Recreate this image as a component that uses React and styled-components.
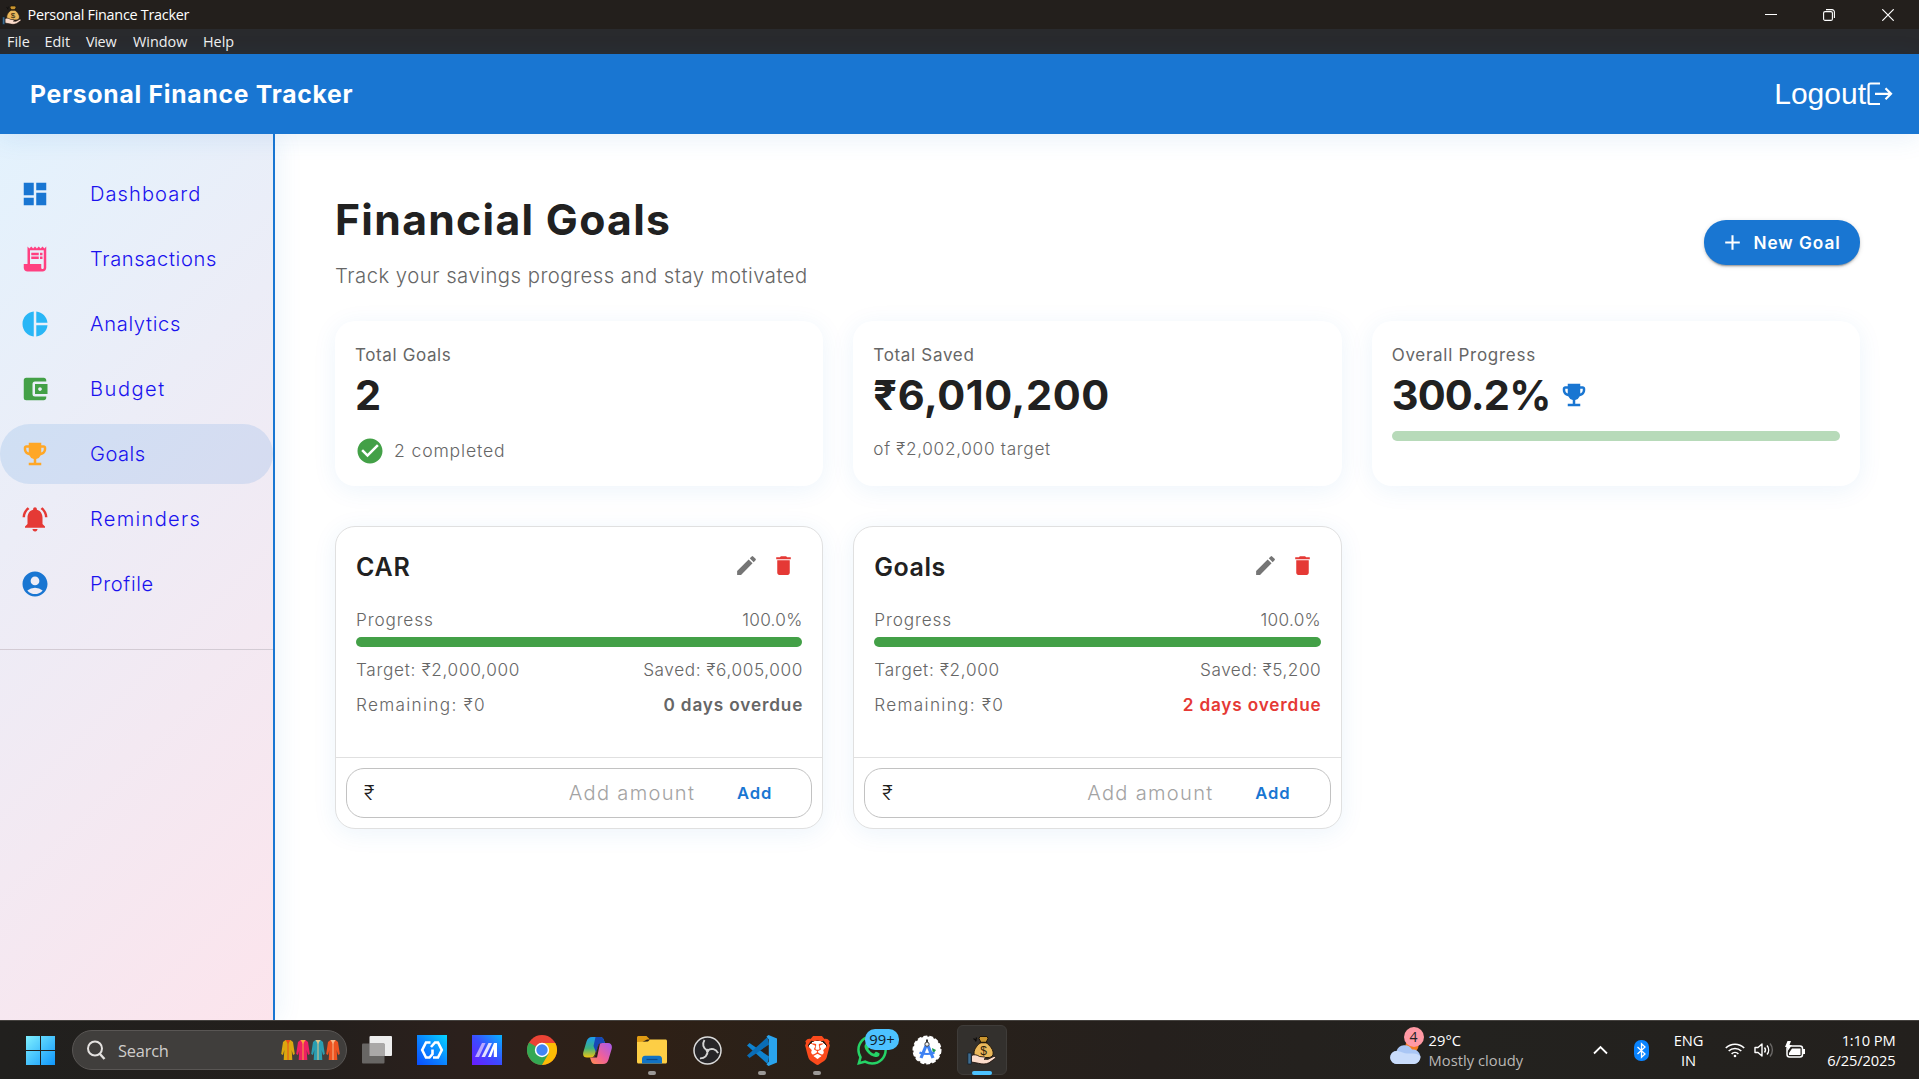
import React from "react";
import styled, { createGlobalStyle } from "styled-components";
import {
  MdDashboard,
  MdReceiptLong,
  MdPieChart,
  MdAccountBalanceWallet,
  MdEmojiEvents,
  MdNotificationsActive,
  MdAccountCircle,
  MdCheckCircle,
  MdEdit,
  MdDelete,
  MdAdd,
} from "react-icons/md";
import { SiWhatsapp, SiBrave } from "react-icons/si";

const c = {
  blue: "#1976d2",
  green: "#43a047",
  red: "#e53935",
  ink: "#212121",
  soft: "#666666",
  link: "#1a12ee",
  line: "#e0e0e0",
};

const GlobalStyle = createGlobalStyle`
  * { box-sizing: border-box; }
  body { margin: 0; background: #fff; overflow: hidden; }
`;

const Screen = styled.div`
  display: flex;
  flex-direction: column;
  width: 1919px;
  height: 1079px;
  overflow: hidden;
  font-family: Inter, "Noto Sans", sans-serif;
  color: ${c.ink};
`;

const Text = styled.span`
  font-size: ${(p) => p.$size}px;
  font-weight: ${(p) => p.$weight || 300};
  color: ${(p) => p.$color || "inherit"};
  letter-spacing: ${(p) => p.$track || 0}px;
  margin-right: ${(p) => -(p.$track || 0)}px;
  line-height: ${(p) => (p.$line ? `${p.$line}px` : "inherit")};
  white-space: nowrap;
`;

/* Window chrome */

const TitleBar = styled.header`
  display: flex;
  align-items: center;
  height: 29px;
  flex: none;
  padding: 0 0 0 2px;
  background: #231f1c;
  color: #fff;
  font-family: "Open Sans", sans-serif;
`;

const TitleText = styled.span`
  flex: 1;
  padding-left: 5.5px;
  font-size: 14.4px;
  letter-spacing: -0.26px;
`;

const WindowButtons = styled.div`
  display: flex;
  align-items: center;
`;

const WindowButton = styled.span`
  display: flex;
  justify-content: center;
  width: 58.5px;
  &:last-child { margin-right: 2px; }
`;

const MenuBar = styled.nav`
  display: flex;
  align-items: center;
  height: 25px;
  flex: none;
  padding-left: 7px;
  background: #292a2d;
  color: #f1f1f1;
  font-family: "Open Sans", sans-serif;
  font-size: 14.4px;
  line-height: 24px;
`;

const MenuItem = styled.span`
  width: ${(p) => p.$w}px;
  letter-spacing: ${(p) => p.$track}px;
`;

/* Application */

const AppBar = styled.header`
  display: flex;
  align-items: center;
  justify-content: space-between;
  height: 80px;
  flex: none;
  padding: 0 26px 0 30px;
  background: ${c.blue};
  color: #fff;
  box-shadow: 0 4px 24px rgba(25, 118, 210, 0.1);
  position: relative;
  z-index: 2;
`;

const Logout = styled.button`
  display: flex;
  align-items: center;
  border: 0;
  padding: 0;
  background: none;
  color: #fff;
  font: 30px/40px "Liberation Sans", sans-serif;
`;

const Body = styled.div`
  display: flex;
  height: 886px;
  flex: none;
`;

const Sidebar = styled.aside`
  width: 275px;
  flex: none;
  padding-top: 30px;
  border-right: 2px solid ${c.blue};
  background: linear-gradient(135deg, #e3f2fd 0%, #fce4ec 100%);
  background-origin: border-box;
  box-shadow: 4px 0 24px rgba(25, 118, 210, 0.08);
`;

const NavList = styled.nav`
  display: flex;
  flex-direction: column;
  gap: 5px;
  padding-bottom: 35px;
  border-bottom: 1px solid #d3cbd4;
`;

const NavItem = styled.a`
  display: flex;
  align-items: center;
  gap: 40px;
  height: 60px;
  padding-left: 20px;
  border-radius: 30px;
  background: ${(p) => (p.$active ? "rgba(25, 118, 210, 0.12)" : "transparent")};
  svg { width: 30px; height: 30px; color: ${(p) => p.$tint}; }
`;

const Main = styled.main`
  flex: 1;
  padding: 60px 59px 0 60px;
`;

const PageHeader = styled.div`
  display: flex;
  align-items: center;
  justify-content: space-between;
  height: 97px;
`;

const Heading = styled.div`
  display: flex;
  flex-direction: column;
  gap: 15px;
`;

const NewGoal = styled.button`
  display: flex;
  align-items: center;
  gap: 9px;
  width: 156px;
  height: 45px;
  padding: 0 0 1px 15.5px;
  border: 0;
  border-radius: 22px;
  background: ${c.blue};
  color: #fff;
  font-family: inherit;
  box-shadow: 0 3px 1px -2px rgba(0, 0, 0, 0.2), 0 2px 2px rgba(0, 0, 0, 0.14),
    0 1px 5px rgba(0, 0, 0, 0.12);
  svg { width: 25px; height: 25px; }
`;

const CardGrid = styled.section`
  display: grid;
  grid-template-columns: repeat(3, 1fr);
  gap: 30px;
  margin-top: ${(p) => p.$top}px;
`;

const Card = styled.article`
  border-radius: 20px;
  background: #fff;
  box-shadow: 0 4px 24px rgba(25, 118, 210, 0.08);
`;

const StatCard = styled(Card)`
  display: flex;
  flex-direction: column;
  height: 165px;
  padding: 20px;
`;

const StatValue = styled.div`
  display: flex;
  align-items: center;
  gap: 8px;
  height: 52px;
  line-height: 52px;
  svg { width: 30px; height: 30px; color: ${c.blue}; }
`;

const Completed = styled.div`
  display: flex;
  align-items: center;
  gap: 9px;
  height: 30px;
  margin-top: 15px;
  line-height: 32px;
  svg { width: 30px; height: 30px; color: ${c.green}; }
`;

const TargetNote = styled.div`
  margin-top: 15px;
  line-height: 26px;
`;

const Bar = styled.div`
  height: 10px;
  margin-top: ${(p) => p.$top}px;
  border-radius: 5px;
  background: ${(p) => p.$color};
`;

const GoalCard = styled(Card)`
  height: 303px;
  border: 1px solid ${c.line};
`;

const GoalBody = styled.div`
  display: flex;
  flex-direction: column;
  height: 230px;
  padding: 20px 20px 0;
`;

const GoalTitle = styled.div`
  display: flex;
  align-items: center;
  justify-content: space-between;
  height: 40px;
  margin-bottom: 20px;
`;

const GoalActions = styled.div`
  display: flex;
  gap: 12px;
  padding: 0 6px 3px 0;
  svg { width: 25px; height: 25px; }
`;

const EditIcon = styled(MdEdit)`
  color: #757575;
`;

const DeleteIcon = styled(MdDelete)`
  color: ${c.red};
`;

const Row = styled.div`
  display: flex;
  justify-content: space-between;
  line-height: 26px;
  margin-top: ${(p) => p.$top || 0}px;
`;

const GoalFooter = styled.footer`
  padding: 10px;
  border-top: 1px solid ${c.line};
`;

const AmountField = styled.div`
  display: flex;
  align-items: center;
  height: 50px;
  padding: 0 40px 0 17px;
  border: 1px solid #c2c2c2;
  border-radius: 18px;
  line-height: 48px;
`;

const Placeholder = styled.span`
  flex: 1;
  margin-right: 43px;
  text-align: right;
`;

/* Taskbar */

const Taskbar = styled.footer`
  display: flex;
  align-items: center;
  height: 59px;
  flex: none;
  position: relative;
  z-index: 3;
  padding-left: 26px;
  border-top: 1px solid #45423f;
  background: linear-gradient(90deg, #21201e 0%, #231f1c 16%, #2b201c 24%, #2e2016 34%, #2a2119 43%, #25201d 60%, #23221f 76%, #23201d 100%);
  color: #fff;
  font-family: "Open Sans", sans-serif;
`;

const SearchBox = styled.div`
  display: flex;
  align-items: center;
  width: 275px;
  height: 40px;
  margin: 0 2.5px 0 17px;
  padding: 0 6px 0 13px;
  border: 1px solid #595654;
  border-radius: 20px;
  background: #403e3c;
`;

const SearchLabel = styled.span`
  flex: 1;
  padding-left: 12px;
  color: #cfcdcb;
  font-size: 16.4px;
  letter-spacing: -0.2px;
`;

const Apps = styled.div`
  display: flex;
`;

const AppSlot = styled.div`
  display: flex;
  align-items: center;
  justify-content: center;
  position: relative;
  width: 55px;
  height: 58px;
  svg { display: block; }
`;

const Running = styled.i`
  position: absolute;
  bottom: 4px;
  left: 50%;
  width: ${(p) => p.$w}px;
  height: 4px;
  margin-left: ${(p) => -p.$w / 2}px;
  border-radius: 2px;
  background: ${(p) => p.$color};
`;

const Badge = styled.b`
  position: absolute;
  top: 8px;
  left: 20.5px;
  width: 34px;
  height: 21px;
  border-radius: 10px;
  background: #4cc2ff;
  color: #10202b;
  font: 400 14.8px/20px "Open Sans", sans-serif;
  text-align: center;
`;

const ActiveTile = styled.div`
  display: flex;
  align-items: center;
  justify-content: center;
  width: 50px;
  height: 50px;
  border: 1px solid #3f3c39;
  border-radius: 6px;
  background: #33302d;
`;

const Weather = styled.div`
  display: flex;
  align-items: center;
  gap: 8px;
  margin-left: 380px;
  width: 203px;
`;

const WeatherIcon = styled.div`
  position: relative;
  width: 31px;
  height: 40px;
`;

const AlertBadge = styled.b`
  position: absolute;
  top: -3px;
  left: 14px;
  width: 20px;
  height: 20px;
  border-radius: 50%;
  background: #ff99a4;
  color: #222;
  font: 400 14px/20px "Open Sans", sans-serif;
  text-align: center;
`;

const Stack = styled.div`
  display: flex;
  flex-direction: column;
  align-items: ${(p) => p.$align};
  width: ${(p) => (p.$w ? `${p.$w}px` : "auto")};
  font-size: 14.7px;
  line-height: 20px;
  letter-spacing: ${(p) => p.$track || 0}px;
  white-space: nowrap;
`;

const Dim = styled.span`
  color: #bab7b5;
`;

const Tray = styled.div`
  display: flex;
  align-items: center;
`;

const TrayIcon = styled.span`
  display: flex;
  align-items: center;
  width: ${(p) => p.$w}px;
`;

const Language = styled.div`
  width: 55px;
`;

function MoneyBag({ size }) {
  return (
    <svg width={size} height={size} viewBox="0 0 30 30">
      <path d="M13 1.500h7l1 2-2 4h-5l-2-4z" fill="#c9952f" stroke="#201508" strokeWidth="1" />
      <path d="M14 7.500h5c4 3 8 7.500 7 12-.6 2.500-3 3-5 3h-9c-3 0-5-1-5-4.500 0-4.500 4-8.500 7-10.500z" fill="#ebb85b" stroke="#251a0c" strokeWidth="1" />
      <path d="M12.500 7.500h8" stroke="#251a0c" strokeWidth="1.500" />
      <path d="M6.500 3.500l3 2.500M9.500 2.500l-1 4" stroke="#0e0c0b" strokeWidth="1.200" />
      <text x="16.500" y="19.500" fontFamily="Liberation Sans" fontSize="12" textAnchor="middle" fill="#2b1d0c">$</text>
      <path d="M4.500 20.500c3-1.500 6-.5 8 1l5 .5c1.500.5 1 2-.5 2.200l4 .1 5-2.500c2-1 3.500.5 2 1.800l-6 4.200c-3 1.500-7 1.500-10.500.5l-7-1.300z" fill="#fcdccb" stroke="#22150f" strokeWidth=".9" />
      <path d="M.8 18h3.400v11H.8z" fill="#3f6f94" stroke="#14202b" strokeWidth=".8" />
    </svg>
  );
}

const Kurta = styled.svg`
  margin-left: 1px;
`;

function Kurtas() {
  const pairs = [
    ["#dba70f", "#e9501c"],
    ["#ee1f63", "#f8a63c"],
    ["#2a9db0", "#e3c489"],
    ["#ee5320", "#f6b98a"],
  ];
  return pairs.map(([body, trim]) => (
    <Kurta key={body} width="14" height="22" viewBox="0 0 14 22">
      <path d="M4.500 1h5l2.500 2 1.800 12-1.800 1-1.300-5 .6 10H2.700l.6-10L2 16l-1.800-1L2 3z" fill={body} />
      <path d="M4.500 1h5L7 5z" fill={trim} />
      <path d="M7 4v17" stroke={trim} strokeWidth="1" />
    </Kurta>
  ));
}

function WindowsLogo() {
  return (
    <svg width="29" height="29" viewBox="0 0 29 29">
      <defs>
        <linearGradient id="win" x1="0" y1="0" x2="1" y2="1">
          <stop offset="0" stopColor="#7ff0ff" />
          <stop offset="1" stopColor="#0f96fb" />
        </linearGradient>
      </defs>
      <path d="M0 0h14v14H0zM15 0h14v14H15zM0 15h14v14H0zM15 15h14v14H15z" fill="url(#win)" />
    </svg>
  );
}

function TaskView() {
  return (
    <svg width="30" height="28" viewBox="0 0 30 28">
      <rect x="7.500" width="22.500" height="20" rx="1" fill="#ededed" />
      <rect y="7.500" width="22.500" height="20" rx="1" fill="#686664" />
      <rect x="7.500" y="7.500" width="15" height="12.500" fill="#aaa8a7" />
    </svg>
  );
}

function HexApp() {
  return (
    <svg width="30" height="30" viewBox="0 0 30 30">
      <defs>
        <linearGradient id="hex" x1="0" y1="1" x2="1" y2="0">
          <stop offset="0" stopColor="#0a4dff" />
          <stop offset=".5" stopColor="#0a86ff" />
          <stop offset="1" stopColor="#05d5ff" />
        </linearGradient>
      </defs>
      <path d="M0 0h30v30H0z" fill="url(#hex)" />
      <g fill="none" stroke="#fff" strokeWidth="2.600">
        <path d="M13.500 7.500H9L5.200 15 9 22.500h3.500l3-3.500v-4.500" />
        <path d="M16 22.500h5l3.800-7.500L21 7.500h-3l-4 4.500" />
      </g>
    </svg>
  );
}

function SlashApp() {
  return (
    <svg width="30" height="30" viewBox="0 0 30 30">
      <defs>
        <linearGradient id="slash" x1="0" y1="1" x2="1" y2="0">
          <stop offset="0" stopColor="#6a1bff" />
          <stop offset=".5" stopColor="#3b4cff" />
          <stop offset="1" stopColor="#05b4ff" />
        </linearGradient>
      </defs>
      <path d="M0 0h30v30H0z" fill="url(#slash)" />
      <path d="M3 22L10 8h3.500L7 22z" fill="#b9a8ff" />
      <path d="M9.500 22l7-14H20l-7 14z" fill="#e3e0ff" />
      <path d="M16 22l6-14h3v14h-3.200v-8L19 22z" fill="#fff" />
    </svg>
  );
}

function Chrome() {
  return (
    <svg width="30" height="30" viewBox="0 0 30 30">
      <circle cx="15" cy="15" r="15" fill="#ea4335" />
      <path d="M15 15L2 7.500A15 15 0 0 0 15 30l7-11z" fill="#34a853" />
      <path d="M15 8h13.300A15 15 0 0 1 15 30l6.500-11.200z" fill="#fbbc05" />
      <circle cx="15" cy="15" r="7.200" fill="#fff" />
      <circle cx="15" cy="15" r="5.700" fill="#4285f4" />
    </svg>
  );
}

function Copilot() {
  return (
    <svg width="29" height="27" viewBox="0 0 29 27">
      <defs>
        <linearGradient id="cpA" x1="0" y1="0" x2="0" y2="1">
          <stop offset="0" stopColor="#1c9bf0" />
          <stop offset=".55" stopColor="#3fb37f" />
          <stop offset="1" stopColor="#f2c40f" />
        </linearGradient>
        <linearGradient id="cpB" x1="1" y1="0" x2="0" y2="1">
          <stop offset="0" stopColor="#a45bf0" />
          <stop offset=".55" stopColor="#f0609a" />
          <stop offset="1" stopColor="#ff8e4c" />
        </linearGradient>
      </defs>
      <path d="M9 0h8c2.500 0 3.500 1.500 4.200 4L22 6h-4c-2 0-3 1-3.700 3.500L12 17c-.8 2.400-2 3.500-4.500 3.500H4C.5 20.500-.6 18 .5 14.500l3-10C4.500 1.500 6 0 9 0z" fill="url(#cpA)" />
      <path d="M20 27h-8c-2.500 0-3.500-1.500-4.200-4L7 20.500h2c2 0 3-1 3.700-3.500L15 9.500C15.800 7 17 6 19.500 6H25c3.500 0 4.600 3 3.500 6.500l-3 10C24.500 25.500 23 27 20 27z" fill="url(#cpB)" />
      <path d="M12.500 0H17c2.500 0 3.500 1.500 4.200 4L22 6h-3c-2.500 0-3.300.8-4.200 3.300L13 15.500 10.500 9z" fill="#1747b8" />
      <path d="M12.700 17L15 9.500c.5-1.500 1-2.300 2-2.900L14 20.500H9c2 0 3-1 3.700-3.500z" fill="#2a211a" />
    </svg>
  );
}

function Folder() {
  return (
    <svg width="30" height="28" viewBox="0 0 30 28">
      <path d="M0 1.500C0 .6.600 0 1.500 0h8l3.500 3.500h-3L0 9z" fill="#e09b13" />
      <path d="M0 6l11-.5 2-2h15.500c.9 0 1.500.6 1.500 1.500V26c0 .9-.6 1.500-1.500 1.500h-27C.6 27.500 0 26.900 0 26z" fill="#fdce45" />
      <path d="M5 27.500V23c0-2 1-3.300 3-3.300h14c2 0 3 1.300 3 3.300v4.500z" fill="#1273c4" />
      <path d="M9.500 23.500h11" stroke="#0a4a8b" strokeWidth="1.200" />
    </svg>
  );
}

function Obs() {
  return (
    <svg width="29" height="29" viewBox="0 0 29 29">
      <circle cx="14.500" cy="14.500" r="13.500" fill="#262528" stroke="#dcdcdc" strokeWidth="1.500" />
      <g fill="none" stroke="#d4d4d4" strokeWidth="1.900">
        <path d="M14.500 14.500C10 12.500 9 8 11.500 4" />
        <path d="M14.500 14.500C10 12.500 9 8 11.500 4" transform="rotate(120 14.500 14.500)" />
        <path d="M14.500 14.500C10 12.500 9 8 11.500 4" transform="rotate(240 14.500 14.500)" />
      </g>
      <circle cx="14.500" cy="14.500" r="1.800" fill="#d4d4d4" />
    </svg>
  );
}

function VsCode() {
  return (
    <svg width="30" height="31" viewBox="0 0 30 31">
      <path d="M2.500 8L0 10.500 20.500 29l1.500-7.500z" fill="#0f83cf" />
      <path d="M2.500 23L0 20.500 20.500 2l1.500 7.500z" fill="#0a6db6" />
      <path d="M21.500 0L30 3.500v24L21.500 31l-2-1.500 2.300-3V4.500l-2.300-3z" fill="#2aa4ee" />
    </svg>
  );
}

const BraveMark = styled.div`
  display: flex;
  padding: 1px;
  background: radial-gradient(closest-side, #fff 62%, transparent 64%);
  color: #fb4a1c;
`;

function AndroidStudio() {
  return (
    <svg width="30" height="30" viewBox="0 0 30 30">
      <circle cx="15" cy="15" r="13.600" fill="#fff" stroke="#fff" strokeWidth="1.800" strokeDasharray="4 2" />
      <path d="M20 13l4 2-3 4z" fill="#1d9a4c" />
      <path d="M15 8.500L9 23M15 8.500L21 23" stroke="#3f82f3" strokeWidth="3.200" />
      <path d="M7.500 17.500c4 2 11 2 15 0" stroke="#3f82f3" strokeWidth="2.200" fill="none" />
      <path d="M15 4.500v3" stroke="#333" strokeWidth="2" />
      <circle cx="15" cy="9.200" r="2.100" fill="#eee" stroke="#444" strokeWidth="1" />
    </svg>
  );
}

const navItems = [
  ["Dashboard", MdDashboard, c.blue, 1.05],
  ["Transactions", MdReceiptLong, "#ff4081", 0.65],
  ["Analytics", MdPieChart, "#29b6f6", 0.68],
  ["Budget", MdAccountBalanceWallet, c.green, 1.5],
  ["Goals", MdEmojiEvents, "#ffa726", 0.5],
  ["Reminders", MdNotificationsActive, c.red, 1.3],
  ["Profile", MdAccountCircle, c.blue, 0.65],
];

const goals = [
  {
    name: ["CAR", 0.8],
    target: "Target: ₹2,000,000",
    saved: ["Saved: ₹6,005,000", 0.6],
    due: ["0 days overdue", 0.7],
    dueColor: c.soft,
  },
  {
    name: ["Goals", 0.5],
    target: "Target: ₹2,000",
    saved: ["Saved: ₹5,200", 0.5],
    due: ["2 days overdue", 0.68],
    dueColor: c.red,
  },
];

function Goal({ goal }) {
  const detail = { $size: 17.2, $color: c.soft };
  return (
    <GoalCard>
      <GoalBody>
        <GoalTitle>
          <Text $size={25} $weight={600} $track={goal.name[1]}>{goal.name[0]}</Text>
          <GoalActions>
            <EditIcon />
            <DeleteIcon />
          </GoalActions>
        </GoalTitle>
        <Row>
          <Text {...detail} $track={0.85}>Progress</Text>
          <Text {...detail} $track={0.28}>100.0%</Text>
        </Row>
        <Bar $top={4} $color={c.green} />
        <Row $top={10}>
          <Text {...detail} $track={0.69}>{goal.target}</Text>
          <Text {...detail} $track={goal.saved[1]}>{goal.saved[0]}</Text>
        </Row>
        <Row $top={9}>
          <Text {...detail} $track={1.3}>Remaining: ₹0</Text>
          <Text $size={17.2} $weight={600} $color={goal.dueColor} $track={goal.due[1] + 0.15}>{goal.due[0]}</Text>
        </Row>
      </GoalBody>
      <GoalFooter>
        <AmountField>
          <Text $size={20.1} $color={c.ink}>₹</Text>
          <Placeholder>
            <Text $size={20.1} $color="#a3a3a3" $track={1.3}>Add amount</Text>
          </Placeholder>
          <Text $size={16.6} $weight={600} $color={c.blue} $track={0.9}>Add</Text>
        </AmountField>
      </GoalFooter>
    </GoalCard>
  );
}

function DesktopTaskbar() {
  return (
    <Taskbar>
      <WindowsLogo />
      <SearchBox>
        <svg width="20" height="20" viewBox="0 0 20 20" fill="none" stroke="#e4e2e0" strokeWidth="2">
          <circle cx="9" cy="8.500" r="7" />
          <path d="M13.500 13.500l5 5.500" strokeWidth="2.400" />
        </svg>
        <SearchLabel>Search</SearchLabel>
        <Kurtas />
      </SearchBox>
      <Apps>
        <AppSlot><TaskView /></AppSlot>
        <AppSlot><HexApp /></AppSlot>
        <AppSlot><SlashApp /></AppSlot>
        <AppSlot><Chrome /></AppSlot>
        <AppSlot><Copilot /></AppSlot>
        <AppSlot><Folder /><Running $w={8} $color="#9c9997" /></AppSlot>
        <AppSlot><Obs /></AppSlot>
        <AppSlot><VsCode /><Running $w={8} $color="#9c9997" /></AppSlot>
        <AppSlot>
          <BraveMark><SiBrave size={29} /></BraveMark>
          <Running $w={8} $color="#9c9997" />
        </AppSlot>
        <AppSlot><SiWhatsapp size={30} color="#25d366" /><Badge>99+</Badge></AppSlot>
        <AppSlot><AndroidStudio /></AppSlot>
        <AppSlot>
          <ActiveTile><MoneyBag size={30} /></ActiveTile>
          <Running $w={20} $color="#4cc2ff" />
        </AppSlot>
      </Apps>
      <Weather>
        <WeatherIcon>
          <svg width="31" height="40" viewBox="0 0 31 40">
            <circle cx="22" cy="16" r="6.500" fill="#f47b20" />
            <path d="M7 34a6.500 6.500 0 0 1-.5-13A8.500 8.500 0 0 1 22 19.500 7 7 0 0 1 24 34z" fill="#a9c6f5" />
            <path d="M7 34a6.500 6.500 0 0 1-.5-13c4 0 7 3 14 2.500 5-.5 8 .5 10 3A7 7 0 0 1 24 34z" fill="#c9dcfb" />
          </svg>
          <AlertBadge>4</AlertBadge>
        </WeatherIcon>
        <Stack $align="flex-start" $track={0.05}>
          <span>29°C</span>
          <Dim>Mostly cloudy</Dim>
        </Stack>
      </Weather>
      <Tray>
        <TrayIcon $w={41}>
          <svg width="15" height="10" viewBox="0 0 15 10" fill="none" stroke="#fff" strokeWidth="1.800">
            <path d="M1 8.500L7.500 2 14 8.500" />
          </svg>
        </TrayIcon>
        <TrayIcon $w={36}>
          <svg width="15" height="21" viewBox="0 0 15 21">
            <rect width="15" height="21" rx="7" fill="#0a84ff" />
            <path d="M3.500 7l7.500 7-3.500 3.300V3.700L11 7l-7.500 7" fill="none" stroke="#fff" strokeWidth="1.300" />
          </svg>
        </TrayIcon>
        <Language>
          <Stack $align="center" $w={38} $track={-0.1}>
            <span>ENG</span>
            <span>IN</span>
          </Stack>
        </Language>
        <TrayIcon $w={29}>
          <svg width="20" height="16" viewBox="0 0 20 16" fill="none" stroke="#fff" strokeWidth="1.600">
            <path d="M.8 6a13 13 0 0 1 18.400 0M3.700 9a9 9 0 0 1 12.600 0M6.600 11.800a5 5 0 0 1 6.800 0" />
            <circle cx="10" cy="14" r="1.300" fill="#fff" stroke="none" />
          </svg>
        </TrayIcon>
        <TrayIcon $w={31}>
          <svg width="21" height="16" viewBox="0 0 21 16" fill="none" stroke="#fff" strokeWidth="1.400">
            <path d="M1 5.500h3L8 2v12l-4-3.500H1z" strokeLinejoin="round" />
            <path d="M10.500 5.500a4 4 0 0 1 0 5M13 3.500a7 7 0 0 1 0 9" />
            <path d="M16 1.500a10 10 0 0 1 0 13" stroke="#6a6866" />
          </svg>
        </TrayIcon>
        <TrayIcon $w={41}>
          <svg width="21" height="18" viewBox="0 0 21 18">
            <rect x="2" y="5" width="15.500" height="11" rx="2.500" fill="none" stroke="#fff" strokeWidth="1.500" />
            <path d="M18 8h2v5h-2z" fill="#fff" />
            <path d="M4 14v-2l3-4.500h8.500V14zM2.500 0L0 6h3l-1 5 5-7H4.500L6 0z" fill="#fff" />
          </svg>
        </TrayIcon>
        <Stack $align="flex-end" $w={70} $track={-0.15}>
          <span>1:10 PM</span>
          <span>6/25/2025</span>
        </Stack>
      </Tray>
    </Taskbar>
  );
}

export default function App() {
  return (
    <Screen>
      <GlobalStyle />
      <TitleBar>
        <MoneyBag size={20} />
        <TitleText>Personal Finance Tracker</TitleText>
        <WindowButtons>
          <WindowButton>
            <svg width="12" height="12" viewBox="0 0 12 12"><path d="M0 5.500h12" stroke="#fff" /></svg>
          </WindowButton>
          <WindowButton>
            <svg width="12" height="12" viewBox="0 0 12 12" fill="none" stroke="#fff" strokeWidth="1.100">
              <rect x=".6" y="2.600" width="8.800" height="8.800" rx="1.500" />
              <path d="M3 .6h6a2.400 2.400 0 0 1 2.400 2.400v6" />
            </svg>
          </WindowButton>
          <WindowButton>
            <svg width="12" height="12" viewBox="0 0 12 12"><path d="M.3.3l11.400 11.400M11.700.3L.3 11.700" stroke="#fff" strokeWidth="1.200" /></svg>
          </WindowButton>
        </WindowButtons>
      </TitleBar>
      <MenuBar>
        <MenuItem $w={37.5}>File</MenuItem>
        <MenuItem $w={41.5}>Edit</MenuItem>
        <MenuItem $w={47} $track={-0.3}>View</MenuItem>
        <MenuItem $w={70}>Window</MenuItem>
        <MenuItem $w={40}>Help</MenuItem>
      </MenuBar>
      <AppBar>
        <Text $size={24.7} $weight={700} $track={0.75}>Personal Finance Tracker</Text>
        <Logout>
          Logout
          <svg width="27" height="26" viewBox="0 0 27 26" fill="none" stroke="#fff" strokeWidth="2.200">
            <path d="M14 2.500H4.500C3.400 2.500 2.600 3.200 2.600 4.300v16.900c0 1.100.8 1.800 1.900 1.800H14M9 12.800h16M19.500 7.300l5.500 5.500-5.500 5.500" />
          </svg>
        </Logout>
      </AppBar>
      <Body>
        <Sidebar>
          <NavList>
            {navItems.map(([label, Icon, tint, track]) => (
              <NavItem key={label} $tint={tint} $active={label === "Goals"}>
                <Icon />
                <Text $size={20.1} $color={c.link} $track={track}>{label}</Text>
              </NavItem>
            ))}
          </NavList>
        </Sidebar>
        <Main>
          <PageHeader>
            <Heading>
              <Text $size={42.7} $weight={700} $track={1.31} $line={52}>Financial Goals</Text>
              <Text $size={20.3} $color={c.soft} $track={0.49} $line={30}>
                Track your savings progress and stay motivated
              </Text>
            </Heading>
            <NewGoal>
              <MdAdd />
              <Text $size={17.2} $weight={600} $track={0.95}>New Goal</Text>
            </NewGoal>
          </PageHeader>
          <CardGrid $top={30}>
            <StatCard>
              <Text $size={17} $weight={400} $color={c.soft} $track={0.62} $line={28}>Total Goals</Text>
              <StatValue><Text $size={41.5} $weight={700}>2</Text></StatValue>
              <Completed>
                <MdCheckCircle />
                <Text $size={17.6} $color={c.soft} $track={0.85}>2 completed</Text>
              </Completed>
            </StatCard>
            <StatCard>
              <Text $size={17} $weight={400} $color={c.soft} $track={0.68} $line={28}>Total Saved</Text>
              <StatValue><Text $size={41.5} $weight={700} $track={0.59}>₹6,010,200</Text></StatValue>
              <TargetNote><Text $size={17.2} $color={c.soft} $track={0.69}>of ₹2,002,000 target</Text></TargetNote>
            </StatCard>
            <StatCard>
              <Text $size={17} $weight={400} $color={c.soft} $track={0.72} $line={28}>Overall Progress</Text>
              <StatValue>
                <Text $size={41.5} $weight={700} $track={-0.8}>300.2%</Text>
                <MdEmojiEvents />
              </StatValue>
              <Bar $top={10} $color="#b7dab9" />
            </StatCard>
          </CardGrid>
          <CardGrid $top={40}>
            {goals.map((goal) => <Goal key={goal.target} goal={goal} />)}
          </CardGrid>
        </Main>
      </Body>
      <DesktopTaskbar />
    </Screen>
  );
}
